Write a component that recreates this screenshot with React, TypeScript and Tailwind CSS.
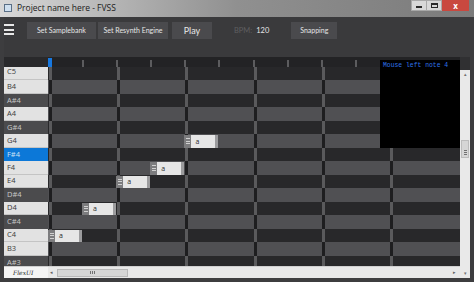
import React from "react";

const keys = [
  { name: "C5", black: false },
  { name: "B4", black: false },
  { name: "A#4", black: true },
  { name: "A4", black: false },
  { name: "G#4", black: true },
  { name: "G4", black: false },
  { name: "F#4", black: true, selected: true },
  { name: "F4", black: false },
  { name: "E4", black: false },
  { name: "D#4", black: true },
  { name: "D4", black: false },
  { name: "C#4", black: true },
  { name: "C4", black: false },
  { name: "B3", black: false },
  { name: "A#3", black: true },
];

// note start, counted in half beats
const notes: Record<string, number> = { G4: 4, F4: 3, E4: 2, D4: 1, C4: 0 };

const ticks = Array.from({ length: 12 }, (_, i) => i);
const beats = Array.from({ length: 6 }, (_, i) => i);

export default function App() {
  return (
    <div className="w-[474px] h-[282px] flex flex-col overflow-hidden bg-[#3d3d3f] font-['Open_Sans',sans-serif]">
      <TitleBar />
      <div className="flex-1 flex flex-col px-[4px] pb-[4px]">
        <Toolbar />
        <div className="flex h-[221px]">
          <div className="relative w-[456px] flex flex-col">
            <Ruler />
            <div className="flex h-[199px] overflow-hidden">
              <div className="w-[44px] flex flex-col shrink-0">
                {keys.map((k, i) => (
                  <PianoKey key={k.name} k={k} first={i === 0} />
                ))}
              </div>
              <div className="w-[412px] flex flex-col shrink-0">
                {keys.map((k, i) => (
                  <GridRow key={k.name} index={i} note={notes[k.name]} first={i === 0} />
                ))}
              </div>
            </div>
            <div className="flex h-[12px]">
              <div className="w-[44px] bg-[#f4f4f4] flex items-center pl-[9px] border-t border-[#cfcfcf]">
                <span className="text-[6px] italic text-[#222] font-['DejaVu_Serif',serif] leading-none">FlexUI</span>
              </div>
              <HScroll />
            </div>
            {/* debug output overlay */}
            <div className="absolute top-[3px] right-0 w-[80px] h-[88px] bg-black px-[3px] pt-[3px]">
              <div className="font-['Liberation_Mono',monospace] text-[6.4px] leading-none text-[#2f74ea]">
                Mouse left note 4
              </div>
            </div>
          </div>
          <VScroll />
        </div>
      </div>
    </div>
  );
}

function TitleBar() {
  return (
    <div className="h-[17px] flex items-start bg-gradient-to-r from-[#d8d8d8] via-[#909090] to-[#7b7b7b]">
      <div className="mt-[4px] ml-[4px] w-[8px] h-[8px] border border-[#5a6f86] bg-[#cfe0f0]" />
      <span className="ml-[5px] mt-[2px] text-[8.5px] leading-[12px] text-[#1b1b1b]">Project name here - FVSS</span>
      <div className="ml-auto mr-[5px] flex h-[11px]">
        <div className="w-[16px] bg-[#d8d8d8] border border-[#a8a8a8] flex items-center justify-center">
          <div className="w-[6px] h-[2px] bg-[#2a2a2a] mt-[3px]" />
        </div>
        <div className="w-[15px] bg-[#d8d8d8] border-y border-r border-[#a8a8a8] flex items-center justify-center">
          <div className="w-[7px] h-[5px] border border-[#2a2a2a] border-t-2" />
        </div>
        <div className="w-[27px] bg-[#c9483f] flex items-center justify-center">
          <span className="text-[8px] font-bold leading-none text-white">x</span>
        </div>
      </div>
    </div>
  );
}

function Toolbar() {
  return (
    <div className="h-[40px] bg-[#3a3a3c] flex items-start pt-[5px] font-['Lato',sans-serif]">
      <div className="w-[10px] mt-[2px] flex flex-col gap-[2.5px]">
        <div className="h-[2px] bg-[#e8e8e8]" />
        <div className="h-[2px] bg-[#e8e8e8]" />
        <div className="h-[2px] bg-[#e8e8e8]" />
      </div>
      <ToolButton label="Set Samplebank" className="ml-[13px] w-[69px] text-[7px]" />
      <ToolButton label="Set Resynth Engine" className="ml-[2px] w-[70px] text-[7px]" />
      <ToolButton label="Play" className="ml-[4px] w-[40px] text-[9px]" />
      <div className="ml-[22px] h-[17px] flex items-center text-[7.5px]">
        <span className="text-[#5e5e60]">BPM:</span>
        <span className="ml-[4px] text-[#e6e6e6]">120</span>
      </div>
      <ToolButton label="Snapping" className="ml-[22px] w-[46px] text-[7px]" />
    </div>
  );
}

function ToolButton({ label, className }: { label: string; className: string }) {
  return (
    <div className={"h-[17px] bg-[#4a4a4d] text-[#e6e6e6] flex items-center justify-center whitespace-nowrap " + className}>
      {label}
    </div>
  );
}

function Ruler() {
  return (
    <div className="flex h-[10px]">
      <div className="w-[44px] bg-[#29292b]" />
      <div className="w-[412px] bg-[#232325] flex items-end pt-[2px] relative">
        <div className="absolute left-0 top-[1px] w-[4px] h-[12px] bg-[#1778e0]" />
        {ticks.map((t) => (
          <div key={t} className="w-[34.1px] shrink-0 h-[7px] flex">
            {t > 0 && <div className="w-[2px] h-full bg-[#5c5c5e]" />}
          </div>
        ))}
      </div>
    </div>
  );
}

function PianoKey({ k, first }: { k: { name: string; black: boolean; selected?: boolean }; first: boolean }) {
  let cls = "bg-[#e2e2e2] text-[#3a3a3a] border-b border-[#c4c4c4]";
  if (k.black) cls = "bg-[#4b4b4d] text-[#c8c8c8]";
  if (k.selected) cls = "bg-[#0c78d8] text-[#cfe2f6]";
  return (
    <div className={(first ? "h-[13px] pb-[2px] " : "h-[13.5px] ") + "shrink-0 flex items-center pl-[3px] text-[7.5px] leading-none " + cls}>
      {k.name}
    </div>
  );
}

function GridRow({ index, note, first }: { index: number; note?: number; first: boolean }) {
  const dark = index % 2 === 0;
  return (
    <div className={(first ? "h-[13px] " : "h-[13.5px] ") + "shrink-0 relative flex pl-[1px] " + (dark ? "bg-[#28282a]" : "bg-[#505053]")}>
      {beats.map((b) => (
        <div key={b} className="flex shrink-0">
          <div className={"w-[3px] h-full " + (dark ? "bg-[#5a5a5c]" : "bg-[#1e1e20]")} />
          <div className="w-[65.2px]" />
        </div>
      ))}
      {note !== undefined && <Note left={note * 34.1} />}
    </div>
  );
}

function Note({ left }: { left: number }) {
  return (
    <div className="absolute top-[1px] bottom-0 w-[34px] flex" style={{ left }}>
      <div className="w-[7px] bg-[#7c7c7e] flex flex-col justify-center items-center gap-[1.5px]">
        <div className="w-[4px] h-[1px] bg-[#d0d0d0]" />
        <div className="w-[4px] h-[1px] bg-[#d0d0d0]" />
        <div className="w-[4px] h-[1px] bg-[#d0d0d0]" />
      </div>
      <div className="flex-1 bg-[#e6e6e6] flex items-center pl-[4px] text-[7px] leading-none text-[#2a2a2a]">a</div>
      <div className="w-[3px] bg-[#9c9c9e]" />
    </div>
  );
}

function HScroll() {
  return (
    <div className="w-[412px] bg-[#e8e8e8] flex items-center border-t border-[#d0d0d0]">
      <span className="ml-[2px] text-[5px] text-[#606060] leading-none">◂</span>
      <div className="ml-[4px] w-[71px] h-[8px] bg-[#d6d6d6] border border-[#b8b8b8] flex items-center justify-center">
        <div className="flex gap-[1px]">
          <div className="w-[1px] h-[3px] bg-[#707070]" />
          <div className="w-[1px] h-[3px] bg-[#707070]" />
          <div className="w-[1px] h-[3px] bg-[#707070]" />
        </div>
      </div>
      <span className="ml-auto mr-[4px] text-[5px] text-[#606060] leading-none">▸</span>
    </div>
  );
}

function VScroll() {
  return (
    <div className="w-[10px] flex flex-col">
      <div className="h-[13px] bg-[#303032]" />
      <div className="flex-1 bg-[#e9e9e9] flex flex-col items-center">
        <span className="mt-[2px] text-[5px] text-[#707070] leading-none">▴</span>
        <div className="mt-[63px] w-[8px] h-[18px] bg-[#d6d6d6] border border-[#bcbcbc] flex items-end justify-center pb-[2px]">
          <div className="flex flex-col gap-[1px]">
            <div className="w-[3px] h-[1px] bg-[#707070]" />
            <div className="w-[3px] h-[1px] bg-[#707070]" />
            <div className="w-[3px] h-[1px] bg-[#707070]" />
          </div>
        </div>
        <span className="mt-auto mb-[2px] text-[5px] text-[#707070] leading-none">▾</span>
      </div>
    </div>
  );
}
